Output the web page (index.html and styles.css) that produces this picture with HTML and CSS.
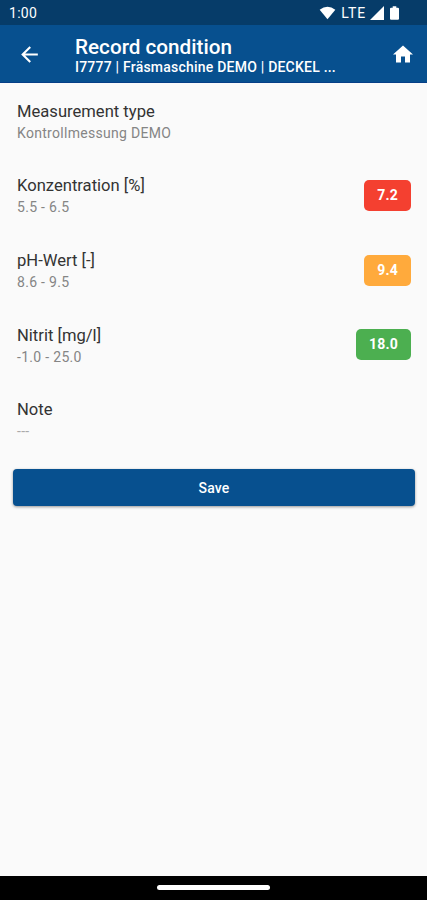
FILE: index.html
```html
<!DOCTYPE html>
<html lang="en">
<head>
  <meta charset="UTF-8" />
  <meta name="viewport" content="width=device-width, initial-scale=1.0"/>
  <title>Record condition</title>
  <link rel="stylesheet" href="styles.css">
</head>
<body>
  <div class="statusbar">
    <span class="time">1:00</span>
    <svg class="wifi" width="17" height="14" viewBox="0 0 18 14"><path d="M9 13.5L.7 3.6Q9-2.6 17.3 3.6z"/></svg>
    <span class="lte">LTE</span>
    <svg class="signal" width="14" height="14" viewBox="0 0 14 14"><path d="M14 0v14H0z"/></svg>
    <svg class="battery" width="9" height="14" viewBox="0 0 10 15"><path d="M3 0h4v1.6h1.8Q10 1.6 10 2.8v11Q10 15 8.800 15H1.200Q0 15 0 13.800v-11Q0 1.600 1.200 1.600H3z"/></svg>
  </div>

  <header class="appbar">
    <svg class="back" width="25" height="25" viewBox="0 0 24 24"><path d="M20 11H7.830l5.590-5.590L12 4l-8 8 8 8 1.410-1.410L7.830 13H20v-2z"/></svg>
    <div class="heading">
      <h1>Record condition</h1>
      <p>I7777 | Fräsmaschine DEMO | DECKEL ...</p>
    </div>
    <svg class="home" width="24" height="25" viewBox="0 0 24 24"><path d="M10 20v-6h4v6h5v-8h3L12 3 2 12h3v8z"/></svg>
  </header>

  <main>
    <div class="row">
      <div class="text">
        <div class="label">Measurement type</div>
        <div class="sub">Kontrollmessung DEMO</div>
      </div>
    </div>
    <div class="row">
      <div class="text">
        <div class="label">Konzentration [%]</div>
        <div class="sub">5.5 - 6.5</div>
      </div>
      <span class="badge red">7.2</span>
    </div>
    <div class="row">
      <div class="text">
        <div class="label">pH-Wert [-]</div>
        <div class="sub">8.6 - 9.5</div>
      </div>
      <span class="badge orange">9.4</span>
    </div>
    <div class="row">
      <div class="text">
        <div class="label">Nitrit [mg/l]</div>
        <div class="sub">-1.0 - 25.0</div>
      </div>
      <span class="badge green">18.0</span>
    </div>
    <div class="row">
      <div class="text">
        <div class="label">Note</div>
        <div class="sub empty">---</div>
      </div>
    </div>
    <button class="save">Save</button>
  </main>

  <footer class="navbar"><span class="handle"></span></footer>
</body>
</html>
```

FILE: styles.css
```css
* { box-sizing: border-box; }
body { margin: 0; height: 900px; display: flex; flex-direction: column; font-family: Roboto, sans-serif; background: #fafafa; color: #333; overflow: hidden; }
h1, p { margin: 0; }
svg { display: block; fill: #fff; flex: none; }

.statusbar { height: 25px; padding: 1px 28px 0 9px; display: flex; align-items: center; background: #063c69; color: #fff; font-size: 14px; }
.time { margin-right: auto; letter-spacing: 0.3px; }
.lte { margin: 0 4px 0 5px; letter-spacing: 0.9px; }
.battery { margin-left: 6px; }

.appbar { height: 58px; padding: 1px 12px 0 17px; display: flex; align-items: center; background: #07508f; border-bottom: 1px solid #063f87; color: #fff; }
.heading { flex: 1; margin-left: 33px; padding-top: 3px; white-space: nowrap; }
.heading h1 { font-size: 20.7px; line-height: 22px; font-weight: 500; }
.heading p { font-size: 14px; line-height: 18px; font-weight: 500; letter-spacing: 0.22px; }

main { flex: 1; }
.row { height: 74.65px; padding: 1px 16px 0 17px; display: flex; align-items: center; justify-content: space-between; }
.text { padding-top: 2px; }
.label { font-size: 16.6px; line-height: 22px; }
.sub { font-size: 14px; line-height: 20px; color: #858585; letter-spacing: 0.3px; }
.empty { color: #aaa; }
.badge { height: 31px; padding: 0 13px; border-radius: 5px; font-size: 14px; line-height: 31px; font-weight: 700; letter-spacing: 0.2px; color: #fff; }
.red { background: #f44030; }
.orange { background: #ffaa3c; }
.green { background: #4caf50; }

.save { display: block; width: 402px; height: 37px; margin: 13px 0 0 13px; padding: 0; border: 0; border-radius: 4px; background: #07508f; box-shadow: 0 1px 3px rgba(0, 0, 0, 0.4); color: #fff; font: 500 14px Roboto, sans-serif; letter-spacing: 0.2px; }

.navbar { height: 24px; display: flex; align-items: center; justify-content: center; background: #000; }
.handle { width: 113px; height: 5px; margin-bottom: 1px; border-radius: 3px; background: #fff; }
```
